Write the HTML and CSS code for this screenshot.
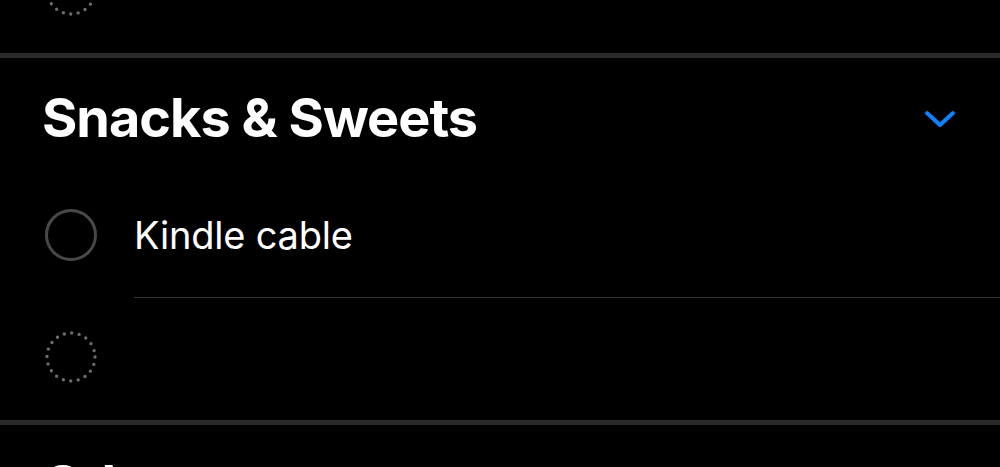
FILE: index.html
```html
<!DOCTYPE html>
<html lang="en">
<head>
    <meta charset="UTF-8">
    <meta name="viewport" content="width=device-width, initial-scale=1.0">
    <title>Lists</title>
    <link rel="stylesheet" href="styles.css">
</head>
<body>
    <div class="section tail">
        <div class="item last">
            <svg class="check" width="52" height="52" viewBox="0 0 52 52">
                <circle class="dots" cx="26" cy="26" r="24"/>
            </svg>
        </div>
    </div>

    <div class="section">
        <div class="header">
            <h2>Snacks &amp; Sweets</h2>
            <svg class="chevron" width="32" height="20" viewBox="0 0 32 20">
                <polyline points="3,4 16,16 29,4"/>
            </svg>
        </div>
        <div class="item">
            <svg class="check" width="52" height="52" viewBox="0 0 52 52">
                <circle class="ring" cx="26" cy="26" r="24.5"/>
            </svg>
            <span class="label">Kindle cable</span>
        </div>
        <div class="divider"></div>
        <div class="item last">
            <svg class="check" width="52" height="52" viewBox="0 0 52 52">
                <circle class="dots" cx="26" cy="26" r="24"/>
            </svg>
        </div>
    </div>

    <div class="section">
        <div class="header">
            <h2>Other</h2>
        </div>
    </div>
</body>
</html>
```

FILE: styles.css
```css
body {
    margin: 0;
    background-color: #000;
    color: #fff;
    font-family: Inter, "Noto Sans", sans-serif;
    overflow: hidden;
}
.section {
    border-bottom: 5px solid #2a2a2c;
}
.tail {
    margin-top: -69px;
}
.header {
    display: flex;
    align-items: center;
    justify-content: space-between;
    height: 118px;
    padding: 0 44px 0 42px;
}
.header h2 {
    margin: 0;
    font-size: 54px;
    font-weight: 700;
    letter-spacing: -1px;
}
.chevron {
    margin-top: 4px;
}
.chevron polyline {
    fill: none;
    stroke: #0a84ff;
    stroke-width: 4;
    stroke-linecap: round;
    stroke-linejoin: round;
}
.item {
    display: flex;
    align-items: center;
    gap: 37px;
    height: 118px;
    padding-left: 45px;
}
.item.last {
    padding-bottom: 4px;
}
.check {
    flex-shrink: 0;
}
.ring {
    fill: none;
    stroke: #48484a;
    stroke-width: 3;
}
.dots {
    fill: none;
    stroke: #6d6d70;
    stroke-width: 3.4;
    stroke-linecap: round;
    stroke-dasharray: 0 7.54;
}
.label {
    font-size: 38px;
    font-weight: 400;
    letter-spacing: -0.2px;
}
.divider {
    height: 1px;
    margin: 3px 0 0 134px;
    background-color: #333335;
}
```
